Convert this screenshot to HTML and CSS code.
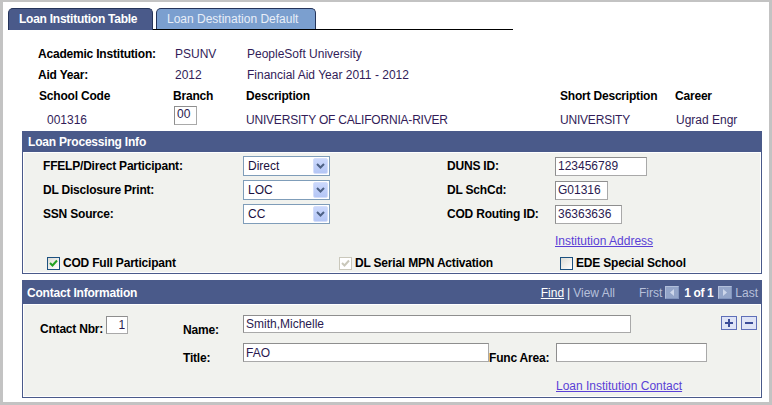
FILE: index.html
```html
<!DOCTYPE html>
<html lang="en">
<head>
    <meta charset="UTF-8">
    <title>Loan Institution Table</title>
    <link rel="stylesheet" href="styles.css">
</head>
<body>
<div class="page">
    <div class="tabs">
        <div class="tab tab-active">Loan Institution Table</div>
        <div class="tab tab-idle">Loan Destination Default</div>
    </div>

    <div class="key-info">
        <div class="kv-row">
            <span class="lbl">Academic Institution:</span>
            <span class="val">PSUNV</span>
            <span class="val">PeopleSoft University</span>
        </div>
        <div class="kv-row">
            <span class="lbl">Aid Year:</span>
            <span class="val">2012</span>
            <span class="val">Financial Aid Year 2011 - 2012</span>
        </div>
    </div>

    <div class="school">
        <span class="lbl head">School Code</span>
        <span class="lbl head">Branch</span>
        <span class="lbl head">Description</span>
        <span class="lbl head">Short Description</span>
        <span class="lbl head">Career</span>
        <span class="val cell code">001316</span>
        <input class="edit branch" type="text" value="00">
        <span class="val cell caps">UNIVERSITY OF CALIFORNIA-RIVER</span>
        <span class="val cell caps">UNIVERSITY</span>
        <span class="val cell career">Ugrad Engr</span>
    </div>

    <div class="group loan">
        <div class="group-head"><span>Loan Processing Info</span></div>
        <div class="group-body">
            <div class="loan-grid">
                <span class="lbl">FFELP/Direct Participant:</span>
                <div class="select"><span class="select-text">Direct</span><span class="drop"><svg width="15" height="16" viewBox="0 0 15 16"><polyline points="4,6 7.5,9.5 11,6" fill="none" stroke="#4d6185" stroke-width="2"/></svg></span></div>
                <span class="lbl">DUNS ID:</span>
                <input class="edit w-duns" type="text" value="123456789">

                <span class="lbl">DL Disclosure Print:</span>
                <div class="select"><span class="select-text">LOC</span><span class="drop"><svg width="15" height="16" viewBox="0 0 15 16"><polyline points="4,6 7.5,9.5 11,6" fill="none" stroke="#4d6185" stroke-width="2"/></svg></span></div>
                <span class="lbl">DL SchCd:</span>
                <input class="edit w-sch" type="text" value="G01316">

                <span class="lbl">SSN Source:</span>
                <div class="select"><span class="select-text">CC</span><span class="drop"><svg width="15" height="16" viewBox="0 0 15 16"><polyline points="4,6 7.5,9.5 11,6" fill="none" stroke="#4d6185" stroke-width="2"/></svg></span></div>
                <span class="lbl">COD Routing ID:</span>
                <input class="edit w-cod" type="text" value="36363636">

                <a class="link addr-link" href="#">Institution Address</a>
            </div>
            <div class="checks">
                <label class="check-item first">
                    <span class="cbox"><svg width="11" height="11" viewBox="0 0 11 11"><polyline points="2,5 4.5,7.5 9,2.5" fill="none" stroke="#21a121" stroke-width="2"/></svg></span>
                    <span class="lbl">COD Full Participant</span>
                </label>
                <label class="check-item second">
                    <span class="cbox disabled"><svg width="11" height="11" viewBox="0 0 11 11"><polyline points="2,5 4.5,7.5 9,2.5" fill="none" stroke="#c9c7ba" stroke-width="2"/></svg></span>
                    <span class="lbl">DL Serial MPN Activation</span>
                </label>
                <label class="check-item">
                    <span class="cbox"></span>
                    <span class="lbl">EDE Special School</span>
                </label>
            </div>
        </div>
    </div>

    <div class="group contact">
        <div class="group-head contact-head">
            <span>Contact Information</span>
            <div class="nav">
                <a class="nav-find" href="#">Find</a>
                <span class="nav-sep">|</span>
                <span class="nav-off">View All</span>
                <span class="nav-off first">First</span>
                <span class="arrow"><svg width="14" height="13" viewBox="0 0 14 13"><polygon points="9,3 5,6.5 9,10" fill="#cdd6ea"/></svg></span>
                <span class="nav-count">1 of 1</span>
                <span class="arrow"><svg width="14" height="13" viewBox="0 0 14 13"><polygon points="5,3 9,6.5 5,10" fill="#cdd6ea"/></svg></span>
                <span class="nav-off">Last</span>
            </div>
        </div>
        <div class="group-body">
            <div class="contact-grid">
                <div class="nbr">
                    <span class="lbl">Cntact Nbr:</span>
                    <input class="edit w-nbr" type="text" value="1">
                </div>
                <span class="lbl low">Name:</span>
                <input class="edit w-name" type="text" value="Smith,Michelle">
                <div class="row-btns">
                    <span class="rbtn"><svg width="14" height="12" viewBox="0 0 14 12"><rect x="3" y="5" width="8" height="2" fill="#3b4c98"/><rect x="6" y="2" width="2" height="8" fill="#3b4c98"/></svg></span>
                    <span class="rbtn"><svg width="14" height="12" viewBox="0 0 14 12"><rect x="3" y="5" width="8" height="2" fill="#3b4c98"/></svg></span>
                </div>

                <span class="lbl low title-lbl">Title:</span>
                <input class="edit w-title" type="text" value="FAO">
                <span class="lbl low">Func Area:</span>
                <input class="edit w-func" type="text" value="">

                <a class="link contact-link" href="#">Loan Institution Contact</a>
            </div>
        </div>
    </div>
</div>
</body>
</html>
```

FILE: styles.css
```css
* {
    box-sizing: border-box;
}
body {
    margin: 0;
    background: #fff;
    font-family: "Liberation Sans", Arial, sans-serif;
    font-size: 12px;
    color: #000;
}
.page {
    width: 772px;
    height: 405px;
    border-style: solid;
    border-color: #c3c3c3;
    border-width: 2px 3px 3px 3px;
    padding: 6px 0 0 5px;
    overflow: hidden;
}

/* tabs */
.tabs {
    display: flex;
    align-items: flex-start;
    gap: 3px;
    width: 505px;
    height: 22px;
    border-bottom: 1px solid #000;
}
.tab {
    height: 21px;
    padding: 1px 0 0 10px;
    line-height: 18px;
    border: 1px solid #25345a;
    border-bottom: 0;
    border-radius: 5px 5px 0 0;
    white-space: nowrap;
}
.tab-active {
    width: 145px;
    height: 22px;
    background: #4a5a8a;
    color: #fff;
    font-weight: bold;
    letter-spacing: -0.25px;
}
.tab-idle {
    width: 160px;
    background: #7b9fcf;
    color: #e8eef8;
}

/* key fields */
.lbl {
    font-weight: bold;
    color: #000;
    white-space: nowrap;
    letter-spacing: -0.2px;
}
.val {
    color: #321c58;
    white-space: nowrap;
}
.caps {
    letter-spacing: -0.2px;
}
.key-info {
    margin: 13px 0 0 30px;
}
.kv-row {
    display: grid;
    grid-template-columns: 137px 72px auto;
    height: 21px;
    align-items: center;
}
.school {
    display: grid;
    grid-template-columns: 134px 73px 314px 115px auto;
    grid-template-rows: 20px 21px;
    margin: 1px 0 0 31px;
}
.school .head {
    align-self: center;
}
.school .cell {
    align-self: end;
    line-height: 14px;
}
.school .code {
    padding-left: 8px;
}
.school .career {
    padding-left: 1px;
}

/* inputs */
.edit {
    height: 19px;
    margin: 0;
    padding: 0 2px;
    border: 1px solid #a9a9a9;
    border-top-color: #8e8e8e;
    border-left-color: #8e8e8e;
    background: #fff;
    font-family: "Liberation Sans", Arial, sans-serif;
    font-size: 12px;
    color: #2a1a50;
    outline: none;
}
.branch {
    width: 23px;
    margin-left: 1px;
    align-self: start;
    padding-bottom: 3px;
}
.w-duns { width: 92px; }
.w-sch { width: 53px; }
.w-cod { width: 67px; }
.w-nbr { width: 22px; height: 18px; margin-top: 1px; text-align: right; }
.w-name { width: 388px; height: 18px; grid-column: 3 / span 3; align-self: start; }
.w-title { width: 246px; align-self: start; }
.w-func { width: 151px; align-self: start; }

.select {
    display: flex;
    align-items: center;
    width: 87px;
    height: 20px;
    border: 1px solid #7f9db9;
    background: #fff;
}
.select-text {
    flex: 1;
    padding-left: 4px;
    color: #1a1040;
}
.drop {
    display: flex;
    width: 15px;
    height: 16px;
    margin-right: 1px;
    border: 1px solid #d4defa;
    border-radius: 2px;
    background: linear-gradient(#cbd8fc, #b4c6f5);
}
.drop svg {
    margin: -1px;
}

/* group boxes */
.group {
    width: 740px;
    margin: 4px 0 0 14px;
    border: 1px solid #4a5a8a;
    background: #fff;
}
.contact {
    margin-top: 6px;
}
.group-head {
    display: flex;
    justify-content: space-between;
    align-items: center;
    height: 20px;
    padding-left: 5px;
    background: #4a5a8a;
    color: #fff;
    font-weight: bold;
    letter-spacing: -0.2px;
}
.contact-head {
    height: 23px;
    padding-left: 4px;
    padding-right: 3px;
}
.group-body {
    margin: 1px;
    background: #f1f2ee;
}

.loan-grid {
    display: grid;
    grid-template-columns: 200px 204px 108px auto;
    grid-template-rows: 24px 24px 24px 28px;
    align-items: center;
    padding: 1px 0 0 19px;
}
.link {
    color: #5a3fd6;
    text-decoration: underline;
    line-height: 14px;
    white-space: nowrap;
}
.addr-link {
    grid-column: 4;
    grid-row: 4;
    align-self: end;
    margin-bottom: 6px;
}

.checks {
    display: flex;
    align-items: center;
    height: 18px;
    padding-left: 23px;
}
.check-item {
    display: flex;
    align-items: center;
    gap: 3px;
}
.check-item.first { width: 292px; }
.check-item.second { width: 221px; }
.cbox {
    display: flex;
    width: 13px;
    height: 13px;
    border: 1px solid #1c5180;
    background: linear-gradient(135deg, #dcdcd5, #fff);
}
.cbox.disabled {
    border-color: #cac8bb;
    background: #fff;
}

/* contact info */
.nav {
    display: flex;
    align-items: center;
    font-weight: normal;
    letter-spacing: 0;
}
.nav-find {
    color: #fff;
    text-decoration: underline;
}
.nav-sep {
    margin: 0 3px;
    color: #fff;
}
.nav-off {
    color: #b7c0da;
}
.nav-off.first {
    margin-left: 24px;
}
.arrow {
    display: flex;
    width: 14px;
    height: 13px;
    margin: 0 3px;
    background: #94a5c9;
    border: 1px solid #8194be;
    border-top-color: #b2bfdb;
    border-left-color: #b2bfdb;
}
.arrow svg {
    margin: -1px;
}
.nav-count {
    margin: 0 2px;
    font-weight: bold;
    color: #fff;
    letter-spacing: -0.4px;
}

.contact-grid {
    display: grid;
    grid-template-columns: 143px 60px 246px 67px 165px 36px;
    grid-template-rows: 22px 22px 22px;
    row-gap: 6px;
    padding: 10px 0 3px 16px;
}
.nbr {
    display: flex;
    align-items: flex-end;
    gap: 3px;
    align-self: start;
}
.nbr .lbl {
    line-height: 14px;
    margin-bottom: -2px;
}
.low {
    align-self: end;
    line-height: 14px;
}
.title-lbl {
    grid-column: 2;
}
.row-btns {
    display: flex;
    gap: 4px;
    align-self: start;
    margin-top: 1px;
}
.rbtn {
    display: flex;
    width: 16px;
    height: 14px;
    border: 1px solid #5f6fb8;
    background: #dfe4f6;
}
.contact-link {
    grid-column: 5;
    grid-row: 3;
    align-self: end;
}
```
